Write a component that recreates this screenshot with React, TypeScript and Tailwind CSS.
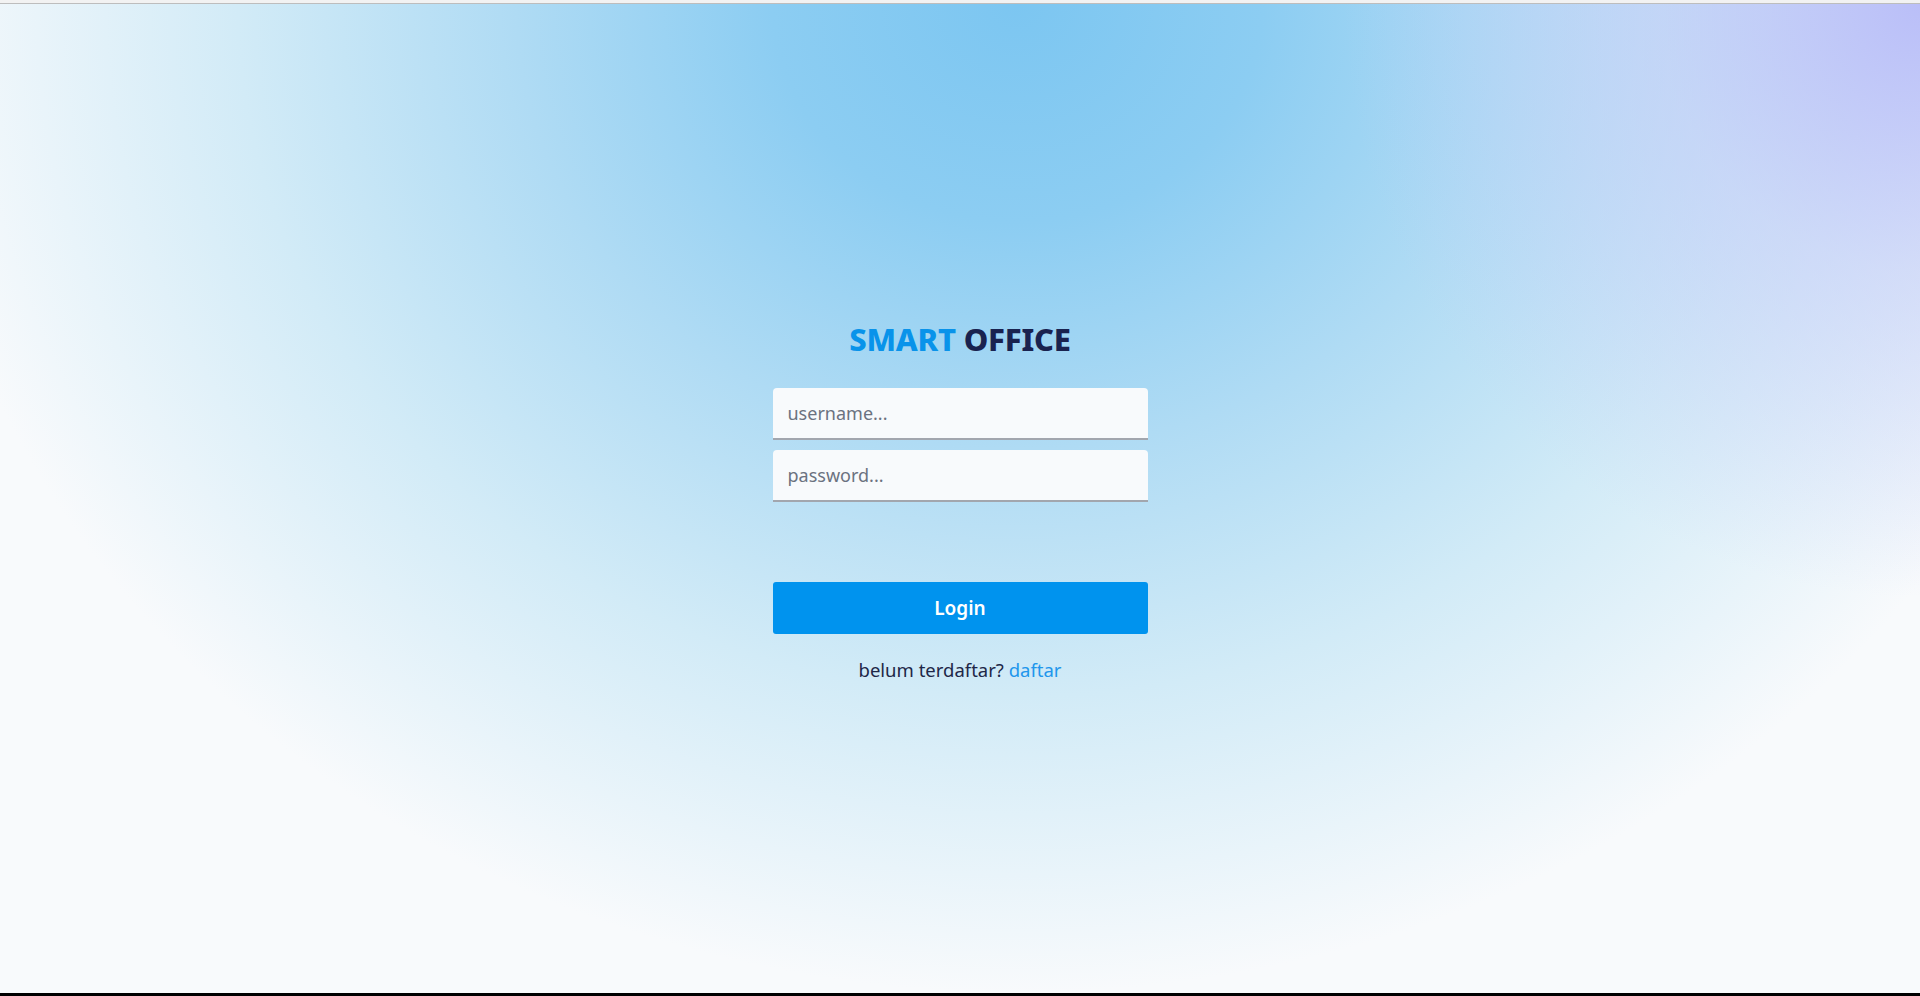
import { useState } from "react";

export default function App() {
  const [username, setUsername] = useState("");
  const [password, setPassword] = useState("");

  return (
    <div className="flex h-[996px] flex-col overflow-hidden font-['Segoe_UI','Noto_Sans','Open_Sans',sans-serif]">
      <div className="h-[4px] shrink-0 border-b border-[#bdbdbd] bg-[#f2f2f2]" />

      <main className="flex flex-1 items-center justify-center bg-[#f8fafc] bg-[radial-gradient(ellipse_30%_60%_at_100%_0%,rgba(184,188,248,0.95)_0%,rgba(196,202,248,0.55)_45%,rgba(220,222,250,0)_100%),radial-gradient(ellipse_58%_100%_at_53%_0%,#7cc6f1_0%,#8ccdf2_22%,#afdbf4_45%,#d2ebf7_70%,#f8fafc_100%)]">
        <form
          className="mt-[5px] flex w-[375px] flex-col items-stretch"
          onSubmit={(e) => e.preventDefault()}
        >
          <h1 className="text-center text-[31px] font-extrabold leading-[40px] tracking-[-0.2px]">
            <span className="text-[#0993ea]">SMART</span>{" "}
            <span className="text-[#19224f]">OFFICE</span>
          </h1>

          <input
            type="text"
            value={username}
            onChange={(e) => setUsername(e.target.value)}
            placeholder="username..."
            className="mt-[29px] h-[52px] rounded-t-[4px] border-b-2 border-[#a2a6ae] bg-[#f8fafc] px-[15px] text-[18px] text-[#1f2937] outline-none placeholder:text-[#6b7280]"
          />
          <input
            type="password"
            value={password}
            onChange={(e) => setPassword(e.target.value)}
            placeholder="password..."
            className="mt-[10px] h-[52px] rounded-t-[4px] border-b-2 border-[#a2a6ae] bg-[#f8fafc] px-[15px] text-[18px] text-[#1f2937] outline-none placeholder:text-[#6b7280]"
          />

          <button
            type="submit"
            className="mt-[80px] h-[52px] rounded-[3px] bg-[#0093ee] text-[19px] font-semibold text-white transition hover:bg-[#0284d6]"
          >
            Login
          </button>

          <p className="mt-[22px] text-center text-[18.5px] leading-[27px] text-[#1e2748]">
            belum terdaftar?{" "}
            <a href="#" className="text-[#2196ec] hover:underline">
              daftar
            </a>
          </p>
        </form>
      </main>

      <div className="h-[3px] shrink-0 bg-black" />
    </div>
  );
}
